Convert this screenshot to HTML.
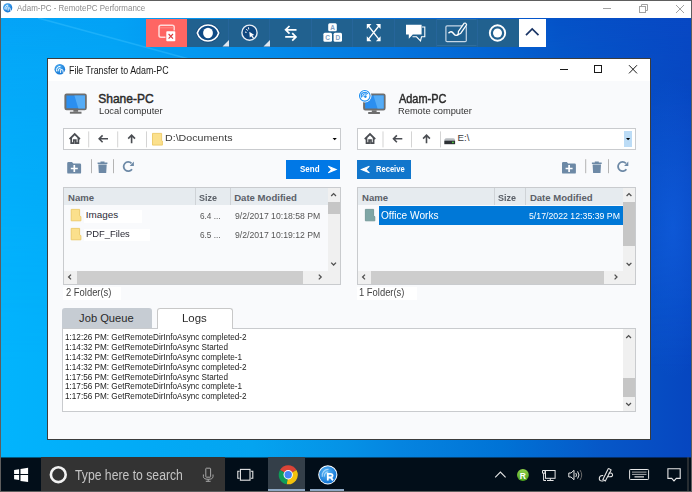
<!DOCTYPE html>
<html><head><meta charset="utf-8">
<style>
*{box-sizing:border-box;margin:0;padding:0}
html,body{width:692px;height:492px;overflow:hidden;background:#fff}
body{position:relative;font-family:"Liberation Sans",sans-serif}
.a{position:absolute}
.t{position:absolute;white-space:nowrap;line-height:1;transform-origin:0 0}
svg{position:absolute;overflow:visible}
#frame{left:0;top:0;width:692px;height:492px;border:1px solid #5e5e5e;z-index:50;pointer-events:none}
#titlebar{left:1px;top:1px;width:690px;height:17px;background:#fff}
#desk{left:1px;top:18px;width:690px;height:440px;background:linear-gradient(to right,#05a4f7 0px,#04a2f5 115px,#0580e8 300px,#0552c8 560px,#0848c4 690px)}
#deskb{left:0;top:0;width:690px;height:440px;background:linear-gradient(to right,#02b4fd 0px,#02aaf6 150px,#04a4f0 250px,#0592e6 345px,#0584e0 400px,#0073d6 500px,#0658c8 600px,#0646c0 690px);-webkit-mask-image:linear-gradient(to bottom,transparent 0%,rgba(0,0,0,.3) 10%,rgba(0,0,0,.78) 50%,#000 80%)}
#deskc{left:600px;top:40px;width:90px;height:380px;background:radial-gradient(ellipse 45px 150px at 72px 170px,rgba(20,100,230,0.55),rgba(20,100,230,0))}
#tb{left:146px;top:19px;width:400px;height:28px;background:#21618f}
.sep{position:absolute;top:0;width:1px;height:28px;background:#2a6399}
#dlg{left:47px;top:58px;width:604px;height:382px;border:1px solid #3c3c3c;background:#f9fafc}
#dlgtitle{left:1px;top:1px;width:602px;height:22px;background:#fff}
#taskbar{left:1px;top:457px;width:690px;height:34px;background:linear-gradient(to bottom,rgba(2,14,25,.55) 0px,rgba(2,14,25,.55) 1px,#020e19 1px)}
.box{position:absolute;border:1px solid #c9cbce;background:#fff}
.hdr{position:absolute;background:#e6ebef}
.hsep{position:absolute;width:1px;background:#cfd3d7}
.wbg{position:absolute;background:#fff}
</style></head><body>
<div id="frame" class="a"></div>
<div id="titlebar" class="a"></div>
<div id="desk" class="a"><div id="deskb" class="a"></div><div id="deskc" class="a"></div></div>
<svg width="692" height="439" style="left:1px;top:18px;overflow:hidden"><path d="M37,0 L199,44" stroke="#40c4ff" stroke-width="1.6" opacity="0.4" style="filter:blur(0.5px)"/></svg>

<!-- outer title text -->
<div class="t" style="left:16.5px;top:4.3px;font-size:9.33px;color:#8c8c8c;transform:scaleX(0.853)">Adam-PC - RemotePC Performance</div>

<!-- toolbar -->
<div id="tb" class="a">
  <div class="a" style="left:0;top:0;width:41px;height:28px;background:#fe6663"></div>
  <div class="a" style="left:373px;top:0;width:27px;height:28px;background:#fff"></div>
</div>

<!-- dialog -->
<div id="dlg" class="a"></div>
<div class="a" style="left:48px;top:59px;width:602px;height:22px;background:#fff"></div>
<div class="t" style="left:68.94px;top:65.6px;font-size:10.29px;color:#1a1a1a;transform:scaleX(0.863)">File Transfer to Adam-PC</div>

<div class="t" style="left:98.2px;top:92.68px;font-size:12.03px;font-weight:400;-webkit-text-stroke:0.45px #2b2b2b;color:#2b2b2b;transform:scaleX(1.0)">Shane-PC</div>
<div class="t" style="left:98.63px;top:105.87px;font-size:9.57px;color:#333;transform:scaleX(0.972)">Local computer</div>
<div class="t" style="left:398.9px;top:92.68px;font-size:12.03px;font-weight:400;-webkit-text-stroke:0.45px #2b2b2b;color:#2b2b2b;transform:scaleX(0.91)">Adam-PC</div>
<div class="t" style="left:397.9px;top:105.87px;font-size:9.57px;color:#333;transform:scaleX(0.972)">Remote computer</div>

<!-- path bars -->
<div class="box" style="left:63px;top:128px;width:278px;height:22px"></div>
<div class="t" style="left:164.7px;top:133.35px;font-size:9.71px;color:#3a3a3a;transform:scaleX(1.098)">D:\Documents</div>
<div class="box" style="left:357px;top:128px;width:279px;height:22px"></div>
<div class="t" style="left:457.5px;top:133.35px;font-size:9.71px;color:#3a3a3a">E:\</div>
<div class="a" style="left:624px;top:131px;width:8px;height:16px;background:#bcdcf6"></div>

<!-- buttons -->
<div class="a" style="left:286px;top:160px;width:54px;height:19px;background:#0078e6"></div>
<div class="t" style="left:299.6px;top:164.61px;font-size:8.7px;font-weight:700;color:#fff;transform:scaleX(0.919)">Send</div>
<div class="a" style="left:357px;top:160px;width:54px;height:19px;background:#1176cc"></div>
<div class="t" style="left:375.5px;top:164.86px;font-size:8.41px;font-weight:700;color:#fff;transform:scaleX(0.9)">Receive</div>

<!-- local list -->
<div class="box" style="left:63px;top:187px;width:278px;height:98px;background:#f9fafc"></div>
<div class="hdr" style="left:64px;top:188px;width:264px;height:17px"></div>
<div class="hsep" style="left:195px;top:188px;height:17px"></div>
<div class="hsep" style="left:230px;top:188px;height:17px"></div>
<div class="t" style="left:68.1px;top:192.8px;font-size:9.57px;font-weight:700;color:#5b6068">Name</div>
<div class="t" style="left:199.46px;top:192.8px;font-size:9.57px;font-weight:700;color:#5b6068;transform:scaleX(0.939)">Size</div>
<div class="t" style="left:234.2px;top:192.8px;font-size:9.57px;font-weight:700;color:#5b6068">Date Modified</div>
<div class="wbg" style="left:84px;top:210px;width:58px;height:13px"></div>
<div class="wbg" style="left:84px;top:229px;width:66px;height:12px"></div>
<div class="t" style="left:85.8px;top:210.4px;font-size:9.9px;color:#2a2a35;transform:scaleX(1.0)">Images</div>
<div class="t" style="left:85.8px;top:229.4px;font-size:9.9px;color:#2a2a35;transform:scaleX(0.95)">PDF_Files</div>
<div class="t" style="left:199.7px;top:210.65px;font-size:9.71px;color:#555;transform:scaleX(0.846)">6.4 ...</div>
<div class="t" style="left:199.7px;top:229.65px;font-size:9.71px;color:#555;transform:scaleX(0.846)">6.5 ...</div>
<div class="t" style="left:234.5px;top:210.65px;font-size:9.71px;color:#555;transform:scaleX(0.892)">9/2/2017 10:18:58 PM</div>
<div class="t" style="left:234.5px;top:229.65px;font-size:9.71px;color:#555;transform:scaleX(0.892)">9/2/2017 10:19:12 PM</div>
<!-- scrollbars local -->
<div class="a" style="left:328px;top:188px;width:12px;height:83px;background:#f0f0f0"></div>
<div class="a" style="left:328px;top:202px;width:12px;height:12px;background:#c6c6c6"></div>
<div class="a" style="left:64px;top:271px;width:264px;height:13px;background:#f0f0f0"></div>
<div class="a" style="left:77px;top:271px;width:226px;height:13px;background:#cdcdcd"></div>
<div class="a" style="left:328px;top:271px;width:12px;height:13px;background:#f0f0f0"></div>
<div class="wbg" style="left:63px;top:287px;width:58px;height:13px"></div>
<div class="t" style="left:65.9px;top:288px;font-size:10px;color:#444;transform:scaleX(0.94)">2 Folder(s)</div>

<!-- remote list -->
<div class="box" style="left:357px;top:187px;width:279px;height:98px;background:#f9fafc"></div>
<div class="hdr" style="left:358px;top:188px;width:265px;height:17px"></div>
<div class="hsep" style="left:494px;top:188px;height:17px"></div>
<div class="hsep" style="left:525px;top:188px;height:17px"></div>
<div class="t" style="left:362.1px;top:192.8px;font-size:9.57px;font-weight:700;color:#5b6068">Name</div>
<div class="t" style="left:498px;top:192.8px;font-size:9.57px;font-weight:700;color:#5b6068;transform:scaleX(0.939)">Size</div>
<div class="t" style="left:529.9px;top:192.8px;font-size:9.57px;font-weight:700;color:#5b6068">Date Modified</div>
<div class="a" style="left:379px;top:206px;width:244px;height:19px;background:#0078d7"></div>
<div class="t" style="left:380.6px;top:210.57px;font-size:10px;color:#fff;transform:scaleX(1.011)">Office Works</div>
<div class="t" style="left:529.4px;top:210.65px;font-size:9.71px;color:#fff;transform:scaleX(0.902)">5/17/2022 12:35:39 PM</div>
<div class="a" style="left:623px;top:188px;width:12px;height:83px;background:#f0f0f0"></div>
<div class="a" style="left:623px;top:202px;width:12px;height:44px;background:#c6c6c6"></div>
<div class="a" style="left:358px;top:271px;width:265px;height:13px;background:#f0f0f0"></div>
<div class="a" style="left:371px;top:271px;width:233px;height:13px;background:#cdcdcd"></div>
<div class="a" style="left:623px;top:271px;width:12px;height:13px;background:#f0f0f0"></div>
<div class="wbg" style="left:357px;top:287px;width:60px;height:13px"></div>
<div class="t" style="left:358.86px;top:288px;font-size:10px;color:#444;transform:scaleX(0.94)">1 Folder(s)</div>

<!-- tabs -->
<div class="a" style="left:62px;top:308px;width:90px;height:21px;background:#c6ccd3;border-radius:3px 3px 0 0"></div>
<div class="t" style="left:79.1px;top:313.1px;font-size:11.16px;color:#2a2a2a">Job Queue</div>
<div class="a" style="left:157px;top:308px;width:76px;height:21px;background:#fff;border:1px solid #c8c8c8;border-bottom:none;border-radius:3px 3px 0 0"></div>
<div class="t" style="left:181.52px;top:312.22px;font-size:11.74px;color:#2a2a2a;transform:scaleX(0.975)">Logs</div>
<div class="box" style="left:62px;top:328px;width:574px;height:84px"></div>
<div class="a" style="left:158px;top:327px;width:74px;height:2px;background:#fff"></div>
<div class="a" style="left:623px;top:329px;width:12px;height:82px;background:#f0f0f0"></div>
<div class="a" style="left:623px;top:378px;width:12px;height:19px;background:#c6c6c6"></div>
<div id="logtext" class="t" style="left:64.86px;top:333.2px;font-size:8.7px;line-height:9.83px;color:#222;transform:scaleX(0.94)">1:12:26 PM: GetRemoteDirInfoAsync completed-2<br>1:14:32 PM: GetRemoteDirInfoAsync Started<br>1:14:32 PM: GetRemoteDirInfoAsync complete-1<br>1:14:32 PM: GetRemoteDirInfoAsync completed-2<br>1:17:56 PM: GetRemoteDirInfoAsync Started<br>1:17:56 PM: GetRemoteDirInfoAsync complete-1<br>1:17:56 PM: GetRemoteDirInfoAsync completed-2</div>

<!-- taskbar -->
<div id="taskbar" class="a">
  <div class="a" style="left:40px;top:0;width:184px;height:34px;background:#333"></div>
  <div class="a" style="left:267px;top:0;width:37px;height:34px;background:#343f49"></div>
</div>
<div class="t" style="left:75.3px;top:469px;font-size:13.91px;color:#c4c4c4;transform:scaleX(0.878)">Type here to search</div>

<svg width="692" height="492" viewBox="0 0 692 492" style="left:0;top:0;z-index:20">
<defs>
 <radialGradient id="rpcg" cx="0.4" cy="0.35" r="0.7"><stop offset="0" stop-color="#5ab8f8"/><stop offset="1" stop-color="#0d6fd0"/></radialGradient>
 <linearGradient id="grnR" x1="0" y1="0" x2="0" y2="1"><stop offset="0" stop-color="#8fd04a"/><stop offset="1" stop-color="#4aa21c"/></linearGradient>
</defs>
<!-- outer title icon -->
<circle cx="7.7" cy="7.8" r="4.6" fill="url(#rpcg)"/>
<path d="M5.2,9.5 A3,3 0 0 1 8.2,5.2 M6.6,9.5 A1.7,1.7 0 0 1 8.2,6.8" stroke="#fff" stroke-width="0.9" fill="none"/>
<path d="M8.2,10.8 V7.8 H9.4 Q10.4,7.8 10.1,9 L10.6,10.8" stroke="#fff" stroke-width="0.8" fill="none"/>
<!-- outer controls -->
<path d="M603,8.5 H611" stroke="#a2a2a2" stroke-width="1"/>
<rect x="639.5" y="6.5" width="6" height="6" fill="none" stroke="#a2a2a2" stroke-width="1"/>
<path d="M641.5,6.5 V4.5 H647.5 V10.5 H645.5" fill="none" stroke="#a2a2a2" stroke-width="1"/>
<path d="M676,5 L684,13 M684,5 L676,13" stroke="#a2a2a2" stroke-width="1"/>

<!-- toolbar separators -->
<g fill="#26659a">
<rect x="228" y="19" width="1" height="28"/><rect x="269" y="19" width="1" height="28"/>
<rect x="311" y="19" width="1" height="28"/><rect x="352" y="19" width="1" height="28"/>
<rect x="394" y="19" width="1" height="28"/><rect x="436" y="19" width="1" height="28"/>
<rect x="477" y="19" width="1" height="28"/>
</g>
<!-- red icon -->
<rect x="159" y="25.2" width="15.2" height="12" rx="2" fill="none" stroke="#ffd9d8" stroke-width="1.5"/>
<path d="M160,27.8 H173.4" stroke="#ff8f8c" stroke-width="0.9"/>
<rect x="165.5" y="30.5" width="10.5" height="11" fill="#fe6663"/>
<rect x="166.3" y="31.3" width="9" height="10" rx="0.8" fill="#fff"/>
<path d="M168.6,34 L173,38.6 M173,34 L168.6,38.6" stroke="#d83a3a" stroke-width="1.1"/>
<!-- eye -->
<path d="M197.3,33 A11.15,11.15 0 0 1 218.7,33 A11.15,11.15 0 0 1 197.3,33 Z" fill="#0f4a85" stroke="#174a7c" stroke-width="3.4" opacity="0.8"/>
<path d="M197.3,33 A11.15,11.15 0 0 1 218.7,33 A11.15,11.15 0 0 1 197.3,33 Z" fill="#0f4a85" stroke="#fff" stroke-width="1.6"/>
<ellipse cx="208" cy="33" rx="4.9" ry="5.2" fill="#fff"/>
<path d="M229,40 V46.5 H222.5 Z" fill="#dfe8f1"/>
<!-- mouse -->
<circle cx="249.5" cy="32.7" r="7.6" fill="#0f477f" stroke="#e8eef5" stroke-width="1.4"/>
<path d="M249.3,31.8 L249.8,37.6 L251.2,36.2 L253,38.6 L254,37.8 L252.3,35.4 L254.3,35 Z" fill="#fff"/>
<path d="M246.3,29 L247.6,30.6 M248.4,27.3 L248.8,29.4 M245,32 L246.6,32.4" stroke="#fff" stroke-width="1"/>
<path d="M270,40 V46.5 H263.5 Z" fill="#dfe8f1"/>
<!-- arrows -->
<path d="M285.6,29.8 H296.5 M289.5,26 L285.6,29.8 L289.5,33.6" fill="none" stroke="#fff" stroke-width="1.7" stroke-linejoin="miter"/>
<path d="M285.2,36.9 H296 M292.2,33.1 L296,36.9 L292.2,40.7" fill="none" stroke="#fff" stroke-width="1.7"/>
<!-- ABC keys -->
<rect x="328.2" y="23.3" width="8.6" height="8" rx="1.5" fill="#fff"/>
<rect x="323.4" y="32.8" width="8.6" height="9" rx="1.5" fill="#fff"/>
<rect x="333.6" y="32.8" width="8.4" height="9" rx="1.5" fill="#fff"/>
<text x="332.5" y="30.2" font-family="Liberation Sans" font-size="6.5" font-weight="700" fill="#7f9fc2" text-anchor="middle">A</text>
<text x="327.7" y="40" font-family="Liberation Sans" font-size="6.5" font-weight="700" fill="#7f9fc2" text-anchor="middle">C</text>
<text x="337.8" y="40" font-family="Liberation Sans" font-size="6.5" font-weight="700" fill="#7f9fc2" text-anchor="middle">D</text>
<!-- fullscreen -->
<path d="M368.5,26 L378.8,39.2 M378.8,26 L368.5,39.2" stroke="#fff" stroke-width="1.3"/>
<path d="M366.8,24 H371.5 L366.8,29 Z M380.6,24 H375.9 L380.6,29 Z M366.8,41.2 H371.5 L366.8,36.2 Z M380.6,41.2 H375.9 L380.6,36.2 Z" fill="#fff"/>
<!-- chat -->
<path d="M422,27 H424.8 V36.8 H421.5 L420.5,41 L416.5,36.8 H412.5" fill="none" stroke="#fff" stroke-width="1.1"/>
<path d="M406,24.7 H421.6 V34.4 H412.8 L408.8,38.8 L408.8,34.4 H406 Z" fill="#fff"/>
<!-- whiteboard -->
<path d="M437,19.5 H476.5 M437,45.6 H476.5" stroke="#3a74a2" stroke-width="1" opacity="0.7"/>
<rect x="445.9" y="25.8" width="20.4" height="15.8" rx="1.2" fill="none" stroke="#c5d6e6" stroke-width="1.2"/>
<path d="M448.5,33.3 C450.5,31 452,31.5 453.5,33.5 C455,35.7 456.8,36.2 458.6,34" fill="none" stroke="#fff" stroke-width="1.4"/>
<path d="M458.2,34.7 L458.4,31.4 L464.1,23.3 Q465.9,22.2 466.6,24.9 L460.8,33.2 Z" fill="#21618f" stroke="#fff" stroke-width="1.2"/>
<!-- record -->
<circle cx="497.5" cy="33" r="7.7" fill="none" stroke="#fff" stroke-width="1.9"/>
<circle cx="497.5" cy="33" r="4.5" fill="#fff"/>
<!-- chevron up -->
<path d="M526,35.2 L532.2,29 L538.5,35.2" fill="none" stroke="#1a3566" stroke-width="1.7"/>

<!-- dialog title icon -->
<circle cx="59.8" cy="69.3" r="5.3" fill="url(#rpcg)"/>
<path d="M56.8,71.5 A3.6,3.6 0 0 1 60.5,66.4 M58.4,71.2 A2,2 0 0 1 60.5,68.4" stroke="#fff" stroke-width="1" fill="none"/>
<path d="M60.6,73 V69.6 H62 Q63.3,69.6 62.9,71 L63.4,73" stroke="#fff" stroke-width="0.9" fill="none"/>
<!-- dialog controls -->
<path d="M560,69.5 H568" stroke="#1a1a1a" stroke-width="1"/>
<rect x="594.5" y="65.5" width="7" height="7" fill="none" stroke="#1a1a1a" stroke-width="1"/>
<path d="M629,65.2 L637,73.4 M637,65.2 L629,73.4" stroke="#1a1a1a" stroke-width="1"/>

<!-- monitors -->
<g id="mon1">
<rect x="65.4" y="94.4" width="20.4" height="14.9" rx="1.2" fill="#2b8ff0" stroke="#6e6e6e" stroke-width="2"/>
<path d="M74.4,95.5 H85 V108.5 H78.4 Z" fill="#55acf6"/>
<rect x="73.4" y="110" width="4.7" height="1.8" fill="#6e6e6e"/>
<rect x="69.9" y="111.7" width="11.6" height="2" fill="#6e6e6e"/>
</g>
<rect x="364.1" y="94.4" width="20.5" height="15.1" rx="1.2" fill="#2b8ff0" stroke="#6e6e6e" stroke-width="2"/>
<path d="M373.5,95.5 H383.7 V108.5 H377.5 Z" fill="#55acf6"/>
<rect x="371.8" y="110.3" width="4.8" height="1.8" fill="#6e6e6e"/>
<rect x="368.2" y="112" width="11.7" height="2" fill="#6e6e6e"/>
<circle cx="364.8" cy="95.8" r="6.7" fill="#fff"/>
<circle cx="364.8" cy="95.8" r="5.3" fill="none" stroke="#1e8ef0" stroke-width="1.1"/>
<path d="M361.77,97.55 A3.5,3.5 0 0 1 367.83,94.05 M363.07,96.8 A2,2 0 0 1 366.53,94.8" stroke="#1e8ef0" stroke-width="1.1" fill="none"/>
<circle cx="365.4" cy="96.6" r="1.3" fill="#1e8ef0"/>

<!-- path bar icons (local) -->
<g id="pb1" stroke="#4a4d52" fill="none">
<path d="M69.6,139.2 L74.7,134.1 L79.9,139.2" stroke-width="1.8"/>
<path d="M71.2,137.8 V143.2 H73.8 V140 H75.8 V143.2 H78.4 V137.8" stroke-width="1.7"/>
<path d="M99.2,138.8 H108 M102.6,135.4 L99.2,138.8 L102.6,142.2" stroke-width="1.6"/>
<path d="M131.6,135.2 V143.2 M128.2,138.6 L131.6,135.2 L135,138.6" stroke-width="1.6"/>
</g>
<g fill="#d4d4d4"><rect x="88.2" y="131.4" width="1" height="16"/><rect x="117.2" y="131.4" width="1" height="16"/><rect x="146" y="131.4" width="1" height="16"/></g>
<g id="pb2" stroke="#4a4d52" fill="none">
<path d="M364.8,139.2 L370,134.1 L375.2,139.2" stroke-width="1.8"/>
<path d="M366.5,137.8 V143.2 H369.1 V140 H371 V143.2 H373.6 V137.8" stroke-width="1.7"/>
<path d="M393.5,138.8 H402.3 M396.9,135.4 L393.5,138.8 L396.9,142.2" stroke-width="1.6"/>
<path d="M426.5,135.2 V143.2 M423.1,138.6 L426.5,135.2 L429.9,138.6" stroke-width="1.6"/>
</g>
<g fill="#d4d4d4"><rect x="382.5" y="131.4" width="1" height="16"/><rect x="411" y="131.4" width="1" height="16"/><rect x="440" y="131.4" width="1" height="16"/></g>
<!-- folder in path -->
<path d="M152.5,133.4 H161.6 V140.5 L162.4,141 V145.1 H152.5 Z" fill="#fbe08c" stroke="#ecc865" stroke-width="0.9"/>
<!-- drive -->
<path d="M444.5,139.5 Q445,138.3 446.5,138.3 H453 Q454.5,138.3 455,139.5 V141 H444.5 Z" fill="#b8bcc0"/>
<rect x="444.3" y="140.7" width="10.8" height="3.5" fill="#2d3135"/>
<rect x="452" y="141.7" width="1.8" height="1.4" fill="#4ccc3a"/>
<!-- dropdown arrows -->
<path d="M332.6,137.9 H336.8 L334.7,140.2 Z" fill="#000"/>
<path d="M626,137.9 H630.2 L628.1,140.2 Z" fill="#000"/>

<!-- action icons local -->
<g fill="#6d89a6">
<path d="M67.2,163.2 Q67.2,161.9 68.5,161.9 H72 L73.3,163.5 H79.8 Q81.1,163.5 81.1,164.8 V172.4 Q81.1,173.6 79.8,173.6 H68.5 Q67.2,173.6 67.2,172.4 Z"/>
<path d="M97.6,162.6 H107.4 V164 H97.6 Z M100.5,161.6 H104.5 V162.6 H100.5 Z M98.3,164.6 H106.7 L106.2,172.9 H98.8 Z"/>
<path d="M562,163.2 Q562,161.9 563.3,161.9 H566.8 L568.1,163.5 H574.6 Q575.9,163.5 575.9,164.8 V172.4 Q575.9,173.6 574.6,173.6 H563.3 Q562,173.6 562,172.4 Z"/>
<path d="M591.9,162.6 H601.7 V164 H591.9 Z M594.8,161.6 H598.8 V162.6 H594.8 Z M592.6,164.6 H601 L600.5,172.9 H593.1 Z"/>
</g>
<path d="M74.3,165 V172 M70.8,168.5 H77.8" stroke="#fff" stroke-width="1.7"/>
<path d="M569.1,165 V172 M565.6,168.5 H572.6" stroke="#fff" stroke-width="1.7"/>
<g fill="#b4b4b4"><rect x="91" y="159.2" width="1" height="14"/><rect x="113" y="159.2" width="1" height="14"/><rect x="585.2" y="159.2" width="1" height="14"/><rect x="608" y="159.2" width="1" height="14"/></g>
<path d="M132,169.2 A4.6,4.6 0 1 1 131.5,163.3" fill="none" stroke="#6d89a6" stroke-width="1.8"/>
<path d="M133.9,161.6 L133.9,166 L129.7,166 Z" fill="#6d89a6"/>
<path d="M626.4,169.2 A4.6,4.6 0 1 1 625.9,163.3" fill="none" stroke="#6d89a6" stroke-width="1.8"/>
<path d="M628.3,161.6 L628.3,166 L624.1,166 Z" fill="#6d89a6"/>
<!-- send / receive arrows -->
<path d="M328,166.4 L336.2,169.5 L328,172.8 L330.8,169.5 Z" fill="#fff"/>
<path d="M361.3,169.5 L369.6,166.4 L366.8,169.5 L369.6,172.8 Z" fill="#fff"/>
<path d="M328.2,166.3 L336,169.5 L328.2,172.8" fill="none" stroke="#fff" stroke-width="1.2"/>
<path d="M369.4,166.3 L361.6,169.5 L369.4,172.8" fill="none" stroke="#fff" stroke-width="1.2"/>

<!-- list folder icons -->
<path d="M71.2,209.4 H79.6 V215.8 L80.9,216.6 V220.8 H71.2 Z" fill="#fbe08c" stroke="#ecc865" stroke-width="0.9"/>
<path d="M71.2,228.4 H79.6 V234.8 L80.9,235.6 V239.8 H71.2 Z" fill="#fbe08c" stroke="#ecc865" stroke-width="0.9"/>
<path d="M365.4,209.4 H373.6 V215.8 L374.8,216.6 V220.8 H365.4 Z" fill="#7fa6a6" stroke="#6f9595" stroke-width="0.9"/>
<!-- scroll arrows -->
<g fill="none" stroke="#505050" stroke-width="1.3">
<path d="M331.2,196 L333.6,193.6 L336,196"/>
<path d="M331.2,262.6 L333.6,265 L336,262.6"/>
<path d="M71,274.6 L68.6,277 L71,279.4"/>
<path d="M318.8,274.6 L321.2,277 L318.8,279.4"/>
<path d="M626.6,196 L629,193.6 L631.4,196"/>
<path d="M626.6,262.9 L629,265.3 L631.4,262.9"/>
<path d="M365,274.6 L362.6,277 L365,279.4"/>
<path d="M614.6,274.6 L617,277 L614.6,279.4"/>
<path d="M626.2,338 L628.6,335.6 L631,338"/>
<path d="M626.2,403 L628.6,405.4 L631,403"/>
</g>

<!-- taskbar icons -->
<path d="M14.1,469.9 L19.1,469.2 V474 H14.1 Z M20.5,469 L28.1,467.8 V474 H20.5 Z M14.1,475.1 H19.1 V479.9 L14.1,479.2 Z M20.5,475.1 H28.1 V482.1 L20.5,480.9 Z" fill="#fff"/>
<circle cx="58.3" cy="474.7" r="7.4" fill="none" stroke="#f2f2f2" stroke-width="2.6"/>
<g fill="none" stroke="#a8a8a8" stroke-width="1">
<rect x="205.8" y="468.2" width="4.8" height="9" rx="0.6"/>
<path d="M203.4,474.5 V476.5 Q203.4,479.3 208.2,479.3 Q213,479.3 213,476.5 V474.5 M208.2,479.3 V481.3 M205.8,481.3 H210.6"/>
</g>
<g fill="none" stroke="#e6e6e6" stroke-width="1.1">
<rect x="240.4" y="469.4" width="9.6" height="10.8"/>
<path d="M239.6,471.3 H237.8 V478.3 H239.6 M250.8,471.3 H252.8 V478.3 H250.8"/>
</g>
<!-- chrome -->
<g transform="translate(288.2,474.8)">
<path d="M0,0 L-8.227,-4.75 A9.5,9.5 0 0 1 8.227,-4.75 Z" fill="#db4437"/>
<path d="M0,0 L8.227,-4.75 A9.5,9.5 0 0 1 -1.5,9.38 Z" fill="#f4c20d"/>
<path d="M0,0 L-1.5,9.38 A9.5,9.5 0 0 1 -8.227,-4.75 Z" fill="#0f9d58"/>
<circle r="4.7" fill="#fff"/>
<circle r="3.7" fill="#4285f4"/>
</g>
<!-- remotepc taskbar -->
<circle cx="327.8" cy="474.8" r="9.6" fill="#fff"/>
<circle cx="327.8" cy="474.8" r="8.6" fill="url(#rpcg)"/>
<path d="M322.3,476.8 A6,6 0 0 1 328.5,469.4 M324.4,476.6 A3.6,3.6 0 0 1 328.3,472.2" stroke="#bfe0fa" stroke-width="1.1" fill="none" opacity="0.8"/>
<path d="M327.8,480.4 V473.8 H330.4 Q332.6,473.8 332.6,475.8 Q332.6,477.3 330.8,477.6 L333,480.4 M327.8,477.5 H330.6" stroke="#fff" stroke-width="1.8" fill="none"/>
<rect x="268" y="489" width="37" height="2" fill="#8ea8c4"/>
<rect x="310" y="489" width="34" height="2" fill="#8ea8c4"/>
<!-- tray -->
<path d="M495.2,477.3 L500.4,472.1 L505.6,477.3" fill="none" stroke="#e6e6e6" stroke-width="1.1"/>
<circle cx="522.9" cy="475" r="5.9" fill="url(#grnR)"/>
<text x="522.9" y="478.6" font-family="Liberation Sans" font-size="8.5" font-weight="700" fill="#fff" text-anchor="middle">R</text>
<g fill="none" stroke="#e6e6e6" stroke-width="1">
<rect x="545.5" y="470.5" width="9.6" height="7.8"/>
<path d="M550.3,478.3 V480.4 M547,480.5 H553.6 M542.5,470.5 H545 V473.2 H542.5 Z M543.6,473.2 V480.5 H546"/>
<path d="M568.8,473 H571 L574,470.3 V479.7 L571,477 H568.8 Z"/>
<path d="M575.8,473 Q577.2,475 575.8,477 M577.6,471.4 Q580.4,475 577.6,478.6"/>
</g>
<path d="M580,470 Q583.4,475 580,480" fill="none" stroke="#6a6a6a" stroke-width="1"/>
<g fill="none" stroke="#e6e6e6" stroke-width="1.1">
<path d="M602.9,479.6 L605.3,480.9 L611.1,469.9 L608.8,468.5 Q608,468.6 607.6,470 Z"/>
<path d="M603.6,480.8 Q599,481.8 599.3,478 Q599.8,475.2 603.2,475.6 M608.6,473.2 Q612.6,472.3 612.6,475.2 Q612.3,477.4 607.9,476.6"/>
</g>
<g fill="none" stroke="#e6e6e6" stroke-width="1">
<rect x="629.6" y="469.5" width="19" height="10" rx="0.8"/>
</g>
<g fill="#cfcfcf">
<rect x="632" y="471.6" width="14.5" height="1" opacity="0.8"/>
<rect x="632" y="473.9" width="14.5" height="1" opacity="0.8"/>
<rect x="634.5" y="476.2" width="9.5" height="1.3"/>
</g>
<path d="M667.9,468.7 H680.2 V478.4 H676.3 L674,480.9 L671.7,478.4 H667.9 Z" fill="none" stroke="#e6e6e6" stroke-width="1.1"/>
<rect x="687.5" y="457" width="1" height="34" fill="#4d4d4d"/>
</svg>
</body></html>
